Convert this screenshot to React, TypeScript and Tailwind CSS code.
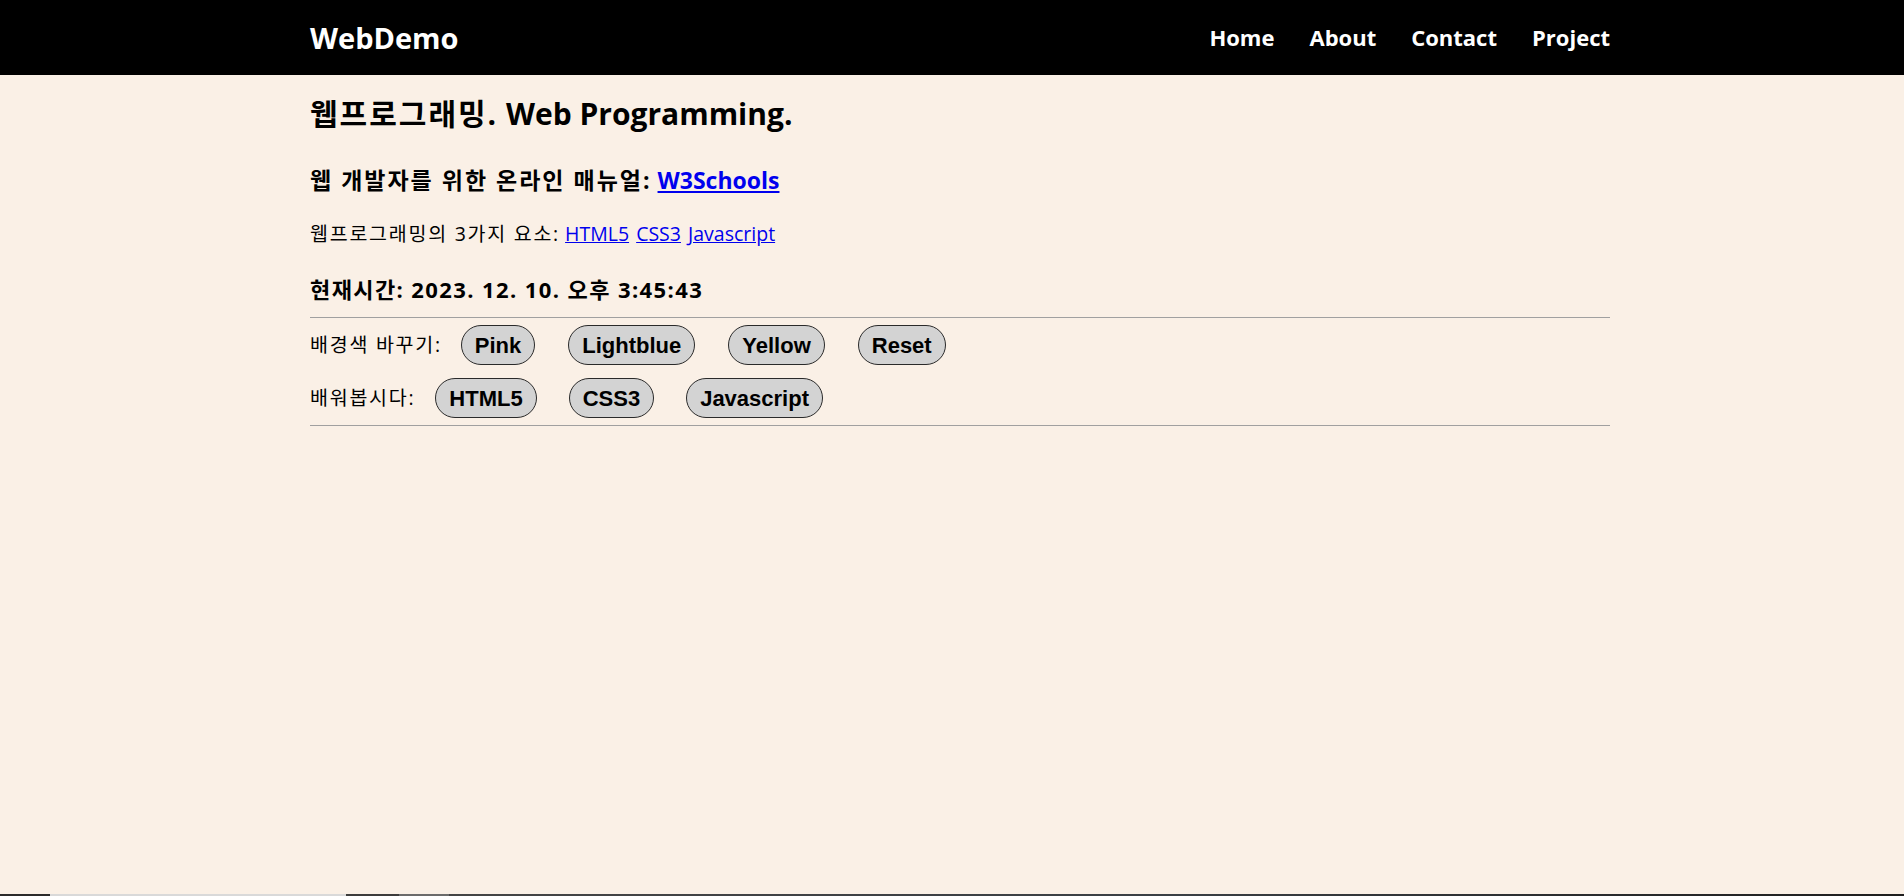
import * as React from "react";

const sans = "font-['Open_Sans','Noto_Sans_CJK_KR',sans-serif]";
const arial = "font-['Liberation_Sans','Noto_Sans_CJK_KR',sans-serif]";

const PillButton = ({ text }: { text: string }) => {
  return (
    <button
      className={`${arial} h-[40px] rounded-full border border-[#2a2a2a] bg-[#d3d3d3] px-[13px] text-[22px] font-bold text-black`}
    >
      {text}
    </button>
  );
};

export default function App() {
  const navItems = ["Home", "About", "Contact", "Project"];
  const colors = ["Pink", "Lightblue", "Yellow", "Reset"];
  const learn = ["HTML5", "CSS3", "Javascript"];

  return (
    <div className={`${sans} flex min-h-[896px] flex-col bg-[#faf0e6] text-black`}>
      <header className="h-[75px] bg-black">
        <div className="ml-[310px] flex h-full w-[1300px] items-center justify-between">
          <div className="text-[29px] font-bold text-white">WebDemo</div>
          <nav className="flex gap-[35px]">
            {navItems.map((item) => (
              <a key={item} className="text-[22px] font-bold text-white">
                {item}
              </a>
            ))}
          </nav>
        </div>
      </header>

      <main className="ml-[310px] w-[1300px] flex-1 pt-[19px]">
        <h2 className="text-[30px] font-bold leading-[40px]">
          <span className="tracking-[2px]">웹프로그래밍.</span> Web Programming.
        </h2>
        <h3 className="mt-[26px] text-[23px] font-bold leading-[40px]">
          <span className="tracking-[2px]">웹 개발자를 위한 온라인 매뉴얼:</span>{" "}
          <a className="text-[#0000ee] underline">W3Schools</a>
        </h3>
        <p className="mt-[19px] text-[19.5px] leading-[30px]">
          <span className="tracking-[1.75px]">웹프로그래밍의 3가지 요소:</span>{" "}
          <a className="text-[#0000ee] underline">HTML5</a>{" "}
          <a className="ml-[2px] text-[#0000ee] underline">CSS3</a>{" "}
          <a className="ml-[2px] text-[#0000ee] underline">Javascript</a>
        </p>
        <p className="mt-[25px] text-[22px] font-bold leading-[30px] tracking-[1.4px]">
          현재시간: 2023. 12. 10. 오후 3:45:43
        </p>
        <hr className="mt-[13px] border-t border-[#a0a0a0]" />
        <div className="mt-[7px] flex h-[40px] items-center">
          <span className="mr-[19px] text-[19.5px] tracking-[1.75px]">배경색 바꾸기:</span>
          <div className="flex gap-[33px]">
            {colors.map((c) => (
              <PillButton key={c} text={c} />
            ))}
          </div>
        </div>
        <div className="mt-[13px] flex h-[40px] items-center">
          <span className="mr-[20px] text-[19.5px] tracking-[1.75px]">배워봅시다:</span>
          <div className="flex gap-[32px]">
            {learn.map((c) => (
              <PillButton key={c} text={c} />
            ))}
          </div>
        </div>
        <hr className="mt-[7px] border-t border-[#a0a0a0]" />
      </main>

      <div className="flex h-[2px]">
        <div className="w-[50px] bg-[#2b2b2b]" />
        <div className="w-[296px] bg-[#d9d9d9]" />
        <div className="w-[53px] bg-[#3c3c3c]" />
        <div className="w-[50px] bg-[#6b6b6b]" />
        <div className="flex-1 bg-gradient-to-r from-[#444] via-[#3a3f44] to-[#1e1e1e]" />
      </div>
    </div>
  );
}
